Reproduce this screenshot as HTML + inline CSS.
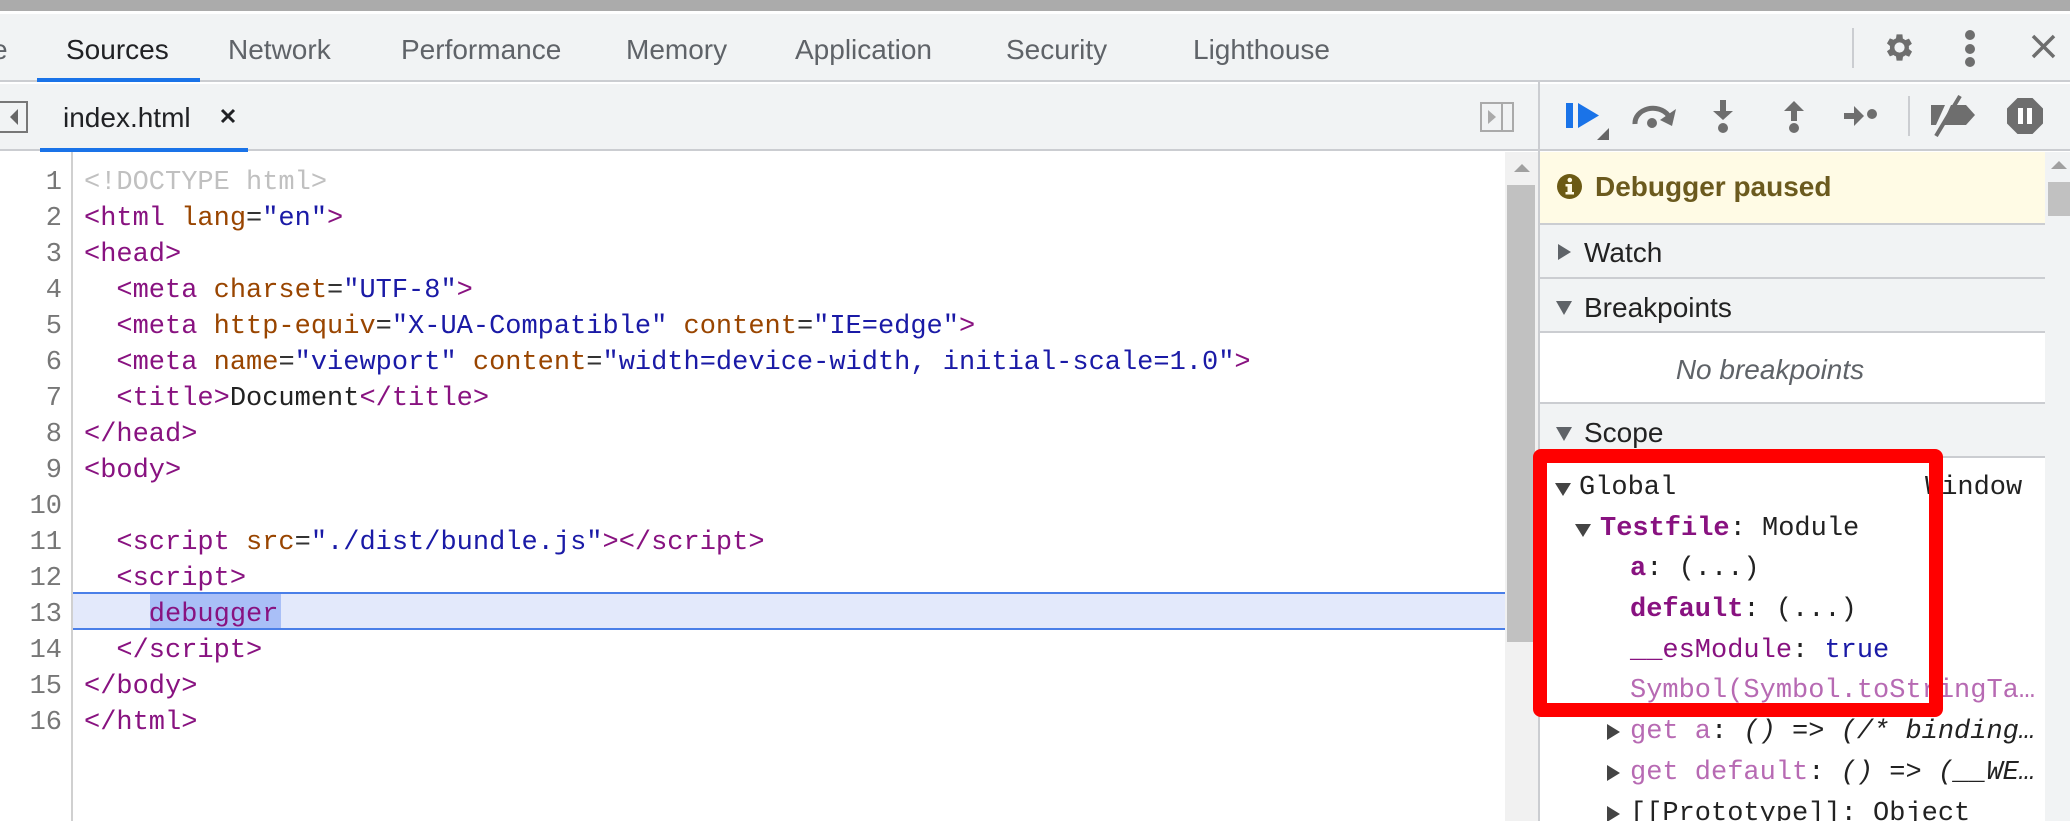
<!DOCTYPE html>
<html><head><meta charset="utf-8"><style>
*{margin:0;padding:0;box-sizing:border-box}
body{width:2070px;height:821px;overflow:hidden;background:#fff;position:relative;font-family:"Liberation Sans",sans-serif;color:#333}
.a{position:absolute}
.mono{font-family:"Liberation Mono","DejaVu Sans Mono",monospace;font-size:27px;white-space:normal}
.mono span{white-space:pre}
.row{position:relative;height:36px}
.tab{position:absolute;top:32px;font-size:28px;color:#5f6368;line-height:36px}
.t{color:#881280}.n{color:#994500}.v{color:#1a1aa6}.d{color:#c0c0c0}
.ln{position:absolute;left:0;width:62px;text-align:right;color:#777}
.sec{position:absolute;font-size:28px;color:#222;line-height:36px}
</style></head><body>
<div class="a" style="left:0;top:0;width:2070px;height:11px;background:#ababab"></div>
<div class="a" style="left:0;top:11px;width:2070px;height:3px;background:#fff"></div>
<div class="a" style="left:0;top:14px;width:2070px;height:68px;background:#f1f3f4;border-bottom:2px solid #cbcdd1"></div>
<div class="tab" style="left:-8px">e</div>
<div class="tab" style="left:66px;color:#202124">Sources</div>
<div class="a" style="left:37px;top:78px;width:163px;height:4px;background:#1a73e8"></div>
<div class="tab" style="left:228px">Network</div>
<div class="tab" style="left:401px">Performance</div>
<div class="tab" style="left:626px">Memory</div>
<div class="tab" style="left:795px">Application</div>
<div class="tab" style="left:1006px">Security</div>
<div class="tab" style="left:1193px">Lighthouse</div>
<div class="a" style="left:1852px;top:28px;width:2px;height:40px;background:#cbcdd1"></div>
<svg class="a" style="left:1882px;top:30px" width="35" height="35" viewBox="0 0 24 24"><path fill="#6e6e6e" d="M19.4 13a7.5 7.5 0 000-2l2.1-1.6-2-3.5-2.5 1a7 7 0 00-1.7-1L15 3h-4l-.4 2.7a7 7 0 00-1.7 1l-2.5-1-2 3.5L6.5 11a7.5 7.5 0 000 2l-2.1 1.6 2 3.5 2.5-1a7 7 0 001.7 1L11 21h4l.4-2.7a7 7 0 001.7-1l2.5 1 2-3.5zM13 15.5a3.5 3.5 0 110-7 3.5 3.5 0 010 7z" transform="translate(-1 0)"/></svg>
<div class="a" style="left:1965px;top:30px;width:10px;height:10px;border-radius:5px;background:#6e6e6e"></div>
<div class="a" style="left:1965px;top:44px;width:10px;height:10px;border-radius:5px;background:#6e6e6e"></div>
<div class="a" style="left:1965px;top:57px;width:10px;height:10px;border-radius:5px;background:#6e6e6e"></div>
<svg class="a" style="left:2031px;top:34px" width="25" height="25"><path d="M2 2L23 23M23 2L2 23" stroke="#6e6e6e" stroke-width="3.5"/></svg>

<div class="a" style="left:0;top:84px;width:1538px;height:67px;background:#f1f3f4;border-bottom:2px solid #cbcdd1"></div>
<div class="a" style="left:0;top:101px;width:28px;height:32px;border:2px solid #777;border-left:none;background:#f1f3f4"></div>
<svg class="a" style="left:6px;top:107px" width="14" height="20"><path d="M12 2L4 10L12 18Z" fill="#666"/></svg>
<div class="a" style="left:63px;top:100px;font-size:28px;color:#202124;line-height:36px">index.html</div>
<svg class="a" style="left:220px;top:108px" width="16" height="16"><path d="M2 2L14 14M14 2L2 14" stroke="#202124" stroke-width="3"/></svg>
<div class="a" style="left:40px;top:148px;width:208px;height:4px;background:#1a73e8"></div>
<svg class="a" style="left:1480px;top:102px" width="34" height="30"><rect x="1" y="1" width="32" height="28" fill="none" stroke="#aaa" stroke-width="2"/><line x1="22" y1="1" x2="22" y2="29" stroke="#aaa" stroke-width="2"/><path d="M8 8L16 15L8 22Z" fill="#aaa"/></svg>

<div class="a" style="left:71px;top:152px;width:2px;height:669px;background:#d0d0d0"></div>
<div class="a" style="left:73px;top:592px;width:1434px;height:38px;background:#e3e9fb;border-top:2px solid #4a7fe8;border-bottom:2px solid #4a7fe8"></div>
<div class="a" style="left:150px;top:594px;width:131px;height:34px;background:#a9bff7"></div>
<div class="a mono" style="left:0;top:165px;width:1500px;line-height:36px">
<div class="row"><span class="ln">1</span><span class="a d" style="left:84px">&lt;!DOCTYPE html&gt;</span></div>
<div class="row"><span class="ln">2</span><span class="a" style="left:84px"><span class="t">&lt;html </span><span class="n">lang</span>=<span class="v">"en"</span><span class="t">&gt;</span></span></div>
<div class="row"><span class="ln">3</span><span class="a t" style="left:84px">&lt;head&gt;</span></div>
<div class="row"><span class="ln">4</span><span class="a" style="left:84px">  <span class="t">&lt;meta </span><span class="n">charset</span>=<span class="v">"UTF-8"</span><span class="t">&gt;</span></span></div>
<div class="row"><span class="ln">5</span><span class="a" style="left:84px">  <span class="t">&lt;meta </span><span class="n">http-equiv</span>=<span class="v">"X-UA-Compatible"</span> <span class="n">content</span>=<span class="v">"IE=edge"</span><span class="t">&gt;</span></span></div>
<div class="row"><span class="ln">6</span><span class="a" style="left:84px">  <span class="t">&lt;meta </span><span class="n">name</span>=<span class="v">"viewport"</span> <span class="n">content</span>=<span class="v">"width=device-width, initial-scale=1.0"</span><span class="t">&gt;</span></span></div>
<div class="row"><span class="ln">7</span><span class="a" style="left:84px">  <span class="t">&lt;title&gt;</span><span style="color:#222">Document</span><span class="t">&lt;/title&gt;</span></span></div>
<div class="row"><span class="ln">8</span><span class="a t" style="left:84px">&lt;/head&gt;</span></div>
<div class="row"><span class="ln">9</span><span class="a t" style="left:84px">&lt;body&gt;</span></div>
<div class="row"><span class="ln">10</span></div>
<div class="row"><span class="ln">11</span><span class="a" style="left:84px">  <span class="t">&lt;script </span><span class="n">src</span>=<span class="v">"./dist/bundle.js"</span><span class="t">&gt;&lt;/script&gt;</span></span></div>
<div class="row"><span class="ln">12</span><span class="a t" style="left:84px">  &lt;script&gt;</span></div>
<div class="row"><span class="ln">13</span><span class="a t" style="left:84px">    debugger</span></div>
<div class="row"><span class="ln">14</span><span class="a t" style="left:84px">  &lt;/script&gt;</span></div>
<div class="row"><span class="ln">15</span><span class="a t" style="left:84px">&lt;/body&gt;</span></div>
<div class="row"><span class="ln">16</span><span class="a t" style="left:84px">&lt;/html&gt;</span></div>
</div>
<div class="a" style="left:1505px;top:152px;width:33px;height:669px;background:#f1f1f1"></div>
<svg class="a" style="left:1513px;top:163px" width="18" height="10"><path d="M1 9L9 1L17 9Z" fill="#a0a0a0"/></svg>
<div class="a" style="left:1507px;top:185px;width:28px;height:457px;background:#c1c1c1"></div>
<div class="a" style="left:1538px;top:82px;width:2px;height:739px;background:#cbcdd1"></div>

<div class="a" style="left:1540px;top:84px;width:530px;height:67px;background:#f1f3f4;border-bottom:2px solid #cbcdd1"></div>
<svg class="a" style="left:1566px;top:103px" width="44" height="38"><rect x="0" y="0" width="7" height="25" fill="#1a73e8"/><path d="M12 0L33 12.5L12 25Z" fill="#1a73e8"/><path d="M43 25L43 37L31 37Z" fill="#666"/></svg>
<svg class="a" style="left:1632px;top:101px" width="46" height="30"><path d="M3 23A18 15 0 0 1 36 14" fill="none" stroke="#6e6e6e" stroke-width="5"/><path d="M44 8L40 25L28 19Z" fill="#6e6e6e"/><circle cx="20" cy="22" r="5" fill="#6e6e6e"/></svg>
<svg class="a" style="left:1712px;top:100px" width="22" height="34"><rect x="8" y="0" width="6" height="12" fill="#6e6e6e"/><path d="M1 11L21 11L11 20Z" fill="#6e6e6e"/><circle cx="11" cy="28" r="5" fill="#6e6e6e"/></svg>
<svg class="a" style="left:1783px;top:100px" width="22" height="34"><path d="M1 11L21 11L11 1Z" fill="#6e6e6e"/><rect x="8" y="10" width="6" height="11" fill="#6e6e6e"/><circle cx="11" cy="28" r="5" fill="#6e6e6e"/></svg>
<svg class="a" style="left:1844px;top:104px" width="34" height="24"><rect x="0" y="9" width="12" height="6" fill="#6e6e6e"/><path d="M10 2L20 12L10 22Z" fill="#6e6e6e"/><circle cx="28" cy="10" r="5" fill="#6e6e6e"/></svg>
<div class="a" style="left:1908px;top:96px;width:2px;height:40px;background:#cbcdd1"></div>
<svg class="a" style="left:1930px;top:95px" width="46" height="42"><path d="M1 10H15L6 30H1Z" fill="#6e6e6e"/><path d="M21 10H36L45 20L36 30H12Z" fill="#6e6e6e"/><path d="M30 1L6 41" stroke="#6e6e6e" stroke-width="4"/></svg>
<svg class="a" style="left:2007px;top:98px" width="36" height="36"><path d="M10.5 0H25.5L36 10.5V25.5L25.5 36H10.5L0 25.5V10.5Z" fill="#6e6e6e"/><rect x="11" y="10" width="5" height="16" fill="#fff"/><rect x="20" y="10" width="5" height="16" fill="#fff"/></svg>

<div class="a" style="left:1540px;top:152px;width:505px;height:669px;background:#f1f3f4"></div>
<div class="a" style="left:1540px;top:152px;width:505px;height:71px;background:#fffbe5"></div>
<svg class="a" style="left:1557px;top:174px" width="25" height="25"><circle cx="12.5" cy="12.5" r="12.5" fill="#6b5a14"/><rect x="10.5" y="10" width="4.5" height="10" fill="#fffbe5"/><rect x="8.5" y="18" width="8.5" height="2.5" fill="#fffbe5"/><rect x="8.5" y="10" width="4" height="2.5" fill="#fffbe5"/><circle cx="12.8" cy="6" r="2.3" fill="#fffbe5"/></svg>
<div class="a" style="left:1595px;top:169px;font-size:28px;font-weight:bold;color:#6b5a1e;line-height:36px">Debugger paused</div>
<div class="a" style="left:1540px;top:223px;width:505px;height:2px;background:#cbcdd1"></div>
<svg class="a" style="left:1558px;top:244px" width="14" height="16"><path d="M0 0L13 8L0 16Z" fill="#5f6368"/></svg>
<div class="sec" style="left:1584px;top:235px">Watch</div>
<div class="a" style="left:1540px;top:277px;width:505px;height:2px;background:#cbcdd1"></div>
<svg class="a" style="left:1556px;top:301px" width="16" height="14"><path d="M0 0L16 0L8 14Z" fill="#5f6368"/></svg>
<div class="sec" style="left:1584px;top:290px">Breakpoints</div>
<div class="a" style="left:1540px;top:331px;width:505px;height:2px;background:#cbcdd1"></div>
<div class="a" style="left:1540px;top:333px;width:505px;height:70px;background:#fff"></div>
<div class="a" style="left:1540px;top:352px;width:460px;text-align:center;font-size:28px;font-style:italic;color:#5f6368;line-height:36px">No breakpoints</div>
<div class="a" style="left:1540px;top:402px;width:505px;height:2px;background:#cbcdd1"></div>
<svg class="a" style="left:1556px;top:427px" width="16" height="14"><path d="M0 0L16 0L8 14Z" fill="#5f6368"/></svg>
<div class="sec" style="left:1584px;top:415px">Scope</div>
<div class="a" style="left:1540px;top:456px;width:505px;height:365px;background:#fff;border-top:2px solid #cbcdd1"></div>

<div class="a mono" style="left:1540px;top:468px;line-height:40.7px;color:#222;width:505px;height:353px;overflow:hidden">
<div class="row" style="height:40.7px"><svg class="a" style="left:15px;top:15px" width="16" height="13"><path d="M0 0L16 0L8 13Z" fill="#444"/></svg><span class="a" style="left:39px">Global</span><span class="a" style="left:385px">Window</span></div>
<div class="row" style="height:40.7px"><svg class="a" style="left:35px;top:15px" width="16" height="13"><path d="M0 0L16 0L8 13Z" fill="#444"/></svg><span class="a" style="left:60px"><b class="t">Testfile</b>: Module</span></div>
<div class="row" style="height:40.7px"><span class="a" style="left:90px"><b class="t">a</b>: (...)</span></div>
<div class="row" style="height:40.7px"><span class="a" style="left:90px"><b class="t">default</b>: (...)</span></div>
<div class="row" style="height:40.7px"><span class="a" style="left:90px"><span class="t">__esModule</span>: <span class="v">true</span></span></div>
<div class="row" style="height:40.7px"><span class="a" style="left:90px;color:#b76ab3">Symbol(Symbol.toStringTa…</span></div>
<div class="row" style="height:40.7px"><svg class="a" style="left:67px;top:12px" width="13" height="16"><path d="M0 0L13 8L0 16Z" fill="#444"/></svg><span class="a" style="left:90px"><span style="color:#b76ab3">get a</span>: <i>() =&gt; (/* binding…</i></span></div>
<div class="row" style="height:40.7px"><svg class="a" style="left:67px;top:12px" width="13" height="16"><path d="M0 0L13 8L0 16Z" fill="#444"/></svg><span class="a" style="left:90px"><span style="color:#b76ab3">get default</span>: <i>() =&gt; (__WE…</i></span></div>
<div class="row" style="height:40.7px"><svg class="a" style="left:67px;top:12px" width="13" height="16"><path d="M0 0L13 8L0 16Z" fill="#444"/></svg><span class="a" style="left:90px">[[Prototype]]: Object</span></div>
</div>
<div class="a" style="left:1533px;top:449px;width:410px;height:268px;border:14px solid #ff0000;border-radius:8px"></div>

<div class="a" style="left:2045px;top:152px;width:25px;height:669px;background:#f1f3f4"></div>
<svg class="a" style="left:2050px;top:160px" width="18" height="10"><path d="M1 9L9 1L17 9Z" fill="#a0a0a0"/></svg>
<div class="a" style="left:2048px;top:182px;width:22px;height:34px;background:#c1c1c1"></div>
</body></html>
